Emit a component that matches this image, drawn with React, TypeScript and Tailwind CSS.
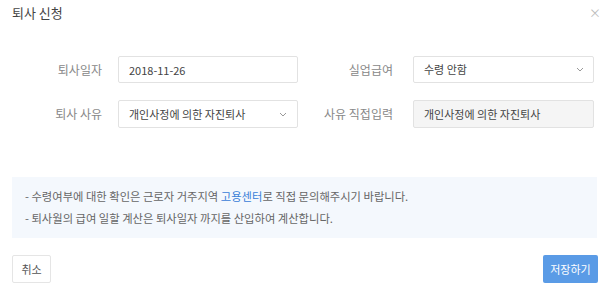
import React, { useState } from "react";

const Chevron = () => (
  <svg width="8" height="5" viewBox="0 0 8 5" fill="none" className="shrink-0">
    <path d="M1 1l3 3 3-3" stroke="#999" strokeWidth="1" />
  </svg>
);

const App = () => {
  const [date, setDate] = useState("2018-11-26");

  return (
    <div
      className="w-[609px] h-[290px] bg-white relative text-[#444]"
      style={{ fontFamily: '"Noto Sans CJK KR", "Noto Sans", sans-serif' }}
    >
      <div className="flex items-center justify-between h-[26px] pl-3 pr-[8px]">
        <span className="text-[13px] text-[#444]">퇴사 신청</span>
        <span className="text-[12px] text-[#bbb] leading-none">×</span>
      </div>

      <div className="grid grid-cols-[90px_180px_83px_181px] gap-x-4 gap-y-[17px] items-center mt-[30px] pl-[12px] text-[11px]">
        <div className="text-right text-[12px] text-[#888]">퇴사일자</div>
        <input
          value={date}
          onChange={(e) => setDate(e.target.value)}
          className="h-[27px] border border-[#e2e2e2] rounded-[2px] px-[10px] text-[11px] text-[#444] outline-none"
        />
        <div className="text-right text-[12px] text-[#888] pr-[4px]">실업급여</div>
        <div className="h-[27px] border border-[#e2e2e2] rounded-[2px] pl-[10px] pr-[9px] flex items-center justify-between">
          <span>수령 안함</span>
          <Chevron />
        </div>

        <div className="text-right text-[12px] text-[#888]">퇴사 사유</div>
        <div className="h-[28px] border border-[#e2e2e2] rounded-[2px] pl-[10px] pr-[10px] flex items-center justify-between">
          <span>개인사정에 의한 자진퇴사</span>
          <Chevron />
        </div>
        <div className="text-right text-[12px] text-[#888] pr-[4px] whitespace-nowrap">사유 직접입력</div>
        <div className="h-[28px] border border-[#e2e2e2] rounded-[2px] px-[10px] flex items-center bg-[#f5f5f5]">
          개인사정에 의한 자진퇴사
        </div>
      </div>

      <div className="mx-[12px] mt-[49px] h-[61px] bg-[#f4f8fd] flex flex-col justify-center gap-[5px] pl-[13px] text-[11.3px] text-[#666]">
        <p>
          - 수령여부에 대한 확인은 근로자 거주지역 <span className="text-[#3a80d8]">고용센터</span>로 직접
          문의해주시기 바랍니다.
        </p>
        <p>- 퇴사월의 급여 일할 계산은 퇴사일자 까지를 산입하여 계산합니다.</p>
      </div>

      <div className="flex items-center justify-between mx-[12px] mt-[17px]">
        <button className="h-[28px] w-[39px] border border-[#e5e5e5] rounded-[2px] text-[11px] text-[#555] bg-white">
          취소
        </button>
        <button className="h-[28px] w-[55px] rounded-[2px] text-[11px] text-white bg-[#5a9be6] mr-[-1px]">
          저장하기
        </button>
      </div>
    </div>
  );
};

export default App;
